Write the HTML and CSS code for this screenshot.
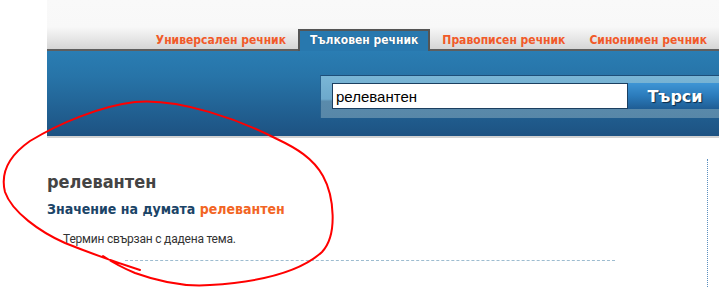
FILE: index.html
```html
<!DOCTYPE html>
<html lang="bg">
<head>
<meta charset="utf-8">
<title>релевантен</title>
<link rel="stylesheet" href="styles.css">
</head>
<body>
<div class="page">
  <div class="topbar">
    <nav class="tabs">
      <a class="tab" href="#">Универсален речник</a>
      <a class="tab active" href="#">Тълковен речник</a>
      <a class="tab" href="#">Правописен речник</a>
      <a class="tab" href="#">Синонимен речник</a>
    </nav>
  </div>
  <div class="header">
    <form class="search">
      <input class="search-input" type="text" value="релевантен">
      <button class="search-btn" type="button">Търси</button>
    </form>
  </div>
  <div class="content">
    <main class="main">
      <h1 class="word">релевантен</h1>
      <h2 class="meaning">Значение на думата <span class="hl">релевантен</span></h2>
      <p class="def">Термин свързан с дадена тема.</p>
      <div class="sep"></div>
    </main>
    <aside class="side"></aside>
  </div>
</div>
<svg class="annot" width="719" height="287" viewBox="0 0 719 287">
  <path d="M103,256 Q118,266 135,273 C160,282 185,287 210,285 C260,282 300,272 322,252 C338,235 334,196 323,176 C313,158 296,148 277,139 C240,120 180,98 135,102 C100,106 58,124 30,141 C10,155 0,172 5,192 C12,212 40,232 65,243 C90,253 115,262 140,270" fill="none" stroke="#ff0000" stroke-width="2" stroke-linecap="round"/>
</svg>
</body>
</html>
```

FILE: styles.css
```css
html, body {
  margin: 0;
  padding: 0;
  background: #fff;
  overflow: hidden;
}

body {
  font-family: "DejaVu Sans Condensed", "DejaVu Sans", Verdana, sans-serif;
  position: relative;
  height: 287px;
}

.page {
  margin-left: 47px;
  width: 672px;
}

.topbar {
  height: 49px;
  background: linear-gradient(#f9f9f9 0%, #f8f8f8 55%, #d6d6d6 100%);
  border-bottom: 2px solid #5e5e5e;
  display: flex;
  justify-content: flex-end;
  align-items: flex-end;
}

.tabs {
  display: flex;
  align-items: flex-end;
  margin-bottom: -2px;
}

.tab {
  display: block;
  padding: 0 10px;
  font-family: "DejaVu Sans Condensed", "DejaVu Sans", sans-serif;
  font-size: 12px;
  font-weight: bold;
  color: #f15a29;
  text-decoration: none;
  border: 2px solid transparent;
  border-bottom: 0;
  margin-bottom: 2px;
  height: 18px;
  line-height: 18px;
}

.tab.active {
  background: #2878ae;
  color: #fff;
  border-color: #555;
  margin-bottom: 0;
  height: 20px;
  line-height: 18px;
  text-shadow: 0 0 1px #1a3f5e;
}

.header {
  height: 87px;
  box-sizing: border-box;
  padding-top: 24px;
  background: linear-gradient(#2a7db3 0%, #2774a8 30%, #1d5282 100%);
  border-bottom: 2px solid #d2d2d2;
  overflow: hidden;
}

.search {
  margin: 0 0 0 273px;
  height: 43px;
  box-sizing: border-box;
  border-top: 1px solid #1d4f7a;
  border-left: 1px solid #2a6390;
  background: linear-gradient(#7ab6d6 0%, #6da9cc 55%, #5a8bac 60%, #5887a8 100%);
  padding: 7px 0 0 11px;
  display: flex;
  width: 420px;
}

.search-input {
  width: 296px;
  height: 26px;
  box-sizing: border-box;
  border: 1px solid #1b3f60;
  margin: 0;
  padding: 0 3px;
  font-family: "Liberation Sans", Arial, sans-serif;
  font-size: 15px;
  color: #000;
  background: #fff;
  outline: none;
}

.search-btn {
  width: 94px;
  height: 26px;
  margin: 0;
  border: 0;
  padding: 0;
  background: linear-gradient(#3e95d5 0%, #2b7bbb 50%, #1f5d94 100%);
  color: #fff;
  font-family: "DejaVu Sans", Verdana, sans-serif;
  font-weight: bold;
  font-size: 16px;
  text-shadow: 1px 1px 1px #0e2a45;
}

.content {
  display: flex;
}

.main {
  width: 660px;
  padding-top: 33px;
}

.word {
  margin: 0;
  font-size: 18px;
  line-height: 22px;
  font-weight: bold;
  color: #444;
}

.meaning {
  margin: 8px 0 0;
  font-size: 14px;
  line-height: 17px;
  font-weight: bold;
  color: #1b4467;
}

.hl {
  color: #f26524;
}

.def {
  margin: 13px 0 0 16px;
  font-family: Roboto, "Liberation Sans", sans-serif;
  font-size: 12px;
  letter-spacing: -0.2px;
  line-height: 16px;
  color: #333;
}

.sep {
  margin: 13px 0 0 78px;
  width: 490px;
  border-top: 1px dashed #9dbcd0;
}

.side {
  margin-top: 21px;
  height: 128px;
  border-left: 1px dotted #5b8fbf;
  flex: 1;
}

.annot {
  position: absolute;
  top: 0;
  left: 0;
  pointer-events: none;
}
```
